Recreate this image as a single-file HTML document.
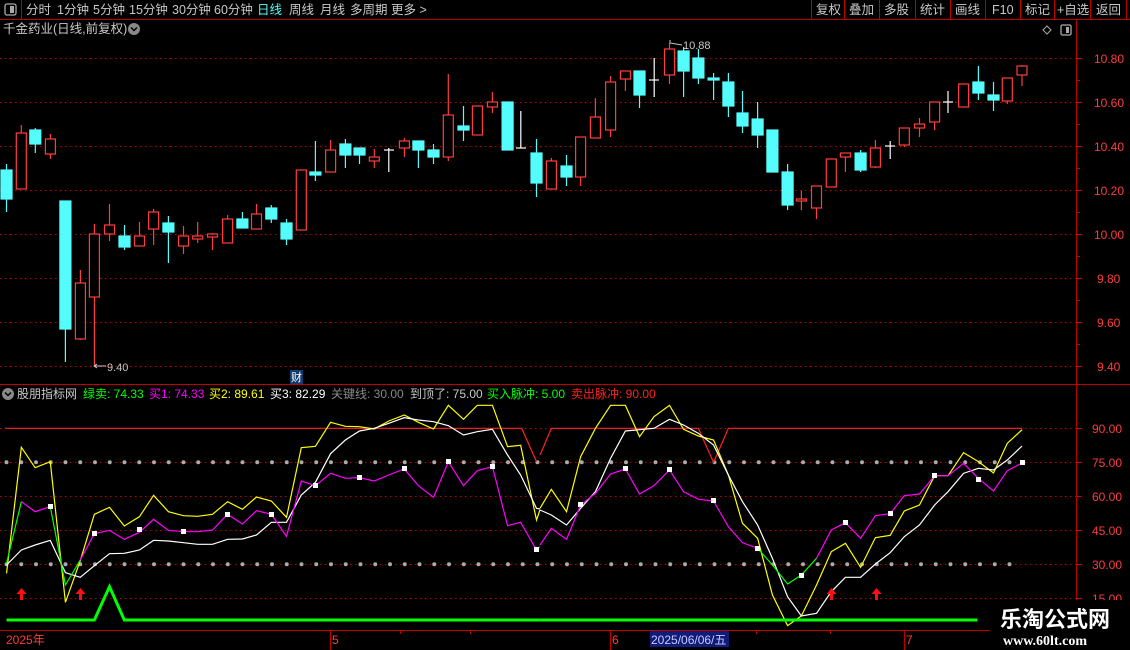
<!DOCTYPE html>
<html><head><meta charset="utf-8"><style>
*{margin:0;padding:0}
body{width:1130px;height:650px;background:#000;overflow:hidden;position:relative;font-family:"Liberation Sans","Noto Sans CJK SC",sans-serif;font-size:12px;color:#c8c8c8}
</style></head><body>
<svg width="1130" height="650" style="position:absolute;left:0;top:0" font-family="Liberation Sans, Noto Sans CJK SC, sans-serif">
<line x1="0" y1="19.5" x2="1130" y2="19.5" stroke="#c00000"/>
<line x1="21.5" y1="0" x2="21.5" y2="19" stroke="#c00000"/>
<rect x="5" y="4" width="11" height="11" rx="2" fill="none" stroke="#aaa" stroke-width="1.3"/><rect x="10" y="6" width="4" height="7" fill="#aaa"/>
<g stroke="#c00000"><line x1="811.5" y1="0" x2="811.5" y2="19"/><line x1="844.5" y1="0" x2="844.5" y2="19"/><line x1="879.5" y1="0" x2="879.5" y2="19"/><line x1="915.5" y1="0" x2="915.5" y2="19"/><line x1="950.5" y1="0" x2="950.5" y2="19"/><line x1="985.5" y1="0" x2="985.5" y2="19"/><line x1="1020.5" y1="0" x2="1020.5" y2="19"/><line x1="1054.5" y1="0" x2="1054.5" y2="19"/><line x1="1090.5" y1="0" x2="1090.5" y2="19"/><line x1="1126.5" y1="0" x2="1126.5" y2="19"/></g>
<g font-size="12.5" fill="#c8c8c8">
<text x="26" y="14">分时</text><text x="57" y="14">1分钟</text><text x="93" y="14">5分钟</text><text x="129" y="14">15分钟</text><text x="172" y="14">30分钟</text><text x="214" y="14">60分钟</text><text x="257" y="14" fill="#54fcfc">日线</text><text x="289" y="14">周线</text><text x="320" y="14">月线</text><text x="350" y="14">多周期</text><text x="391" y="14">更多 &gt;</text>
<text x="816" y="14">复权</text><text x="849" y="14">叠加</text><text x="884" y="14">多股</text><text x="920" y="14">统计</text><text x="955" y="14">画线</text><text x="992" y="14">F10</text><text x="1025" y="14">标记</text><text x="1057" y="14">+自选</text><text x="1096" y="14">返回</text>
</g>
<text x="3" y="33" font-size="12.5" fill="#c8c8c8">千金药业(日线,前复权)</text>
<circle cx="134" cy="29" r="6" fill="#888"/><path d="M131 27.5l3 3 3-3" stroke="#000" stroke-width="1.5" fill="none"/>
<path d="M1047 26l4 4-4 4-4-4z" fill="none" stroke="#aaa"/>
<rect x="1061" y="25" width="10" height="10" rx="1.5" fill="none" stroke="#aaa" stroke-width="1.3"/><rect x="1066" y="27" width="3" height="6" fill="#aaa"/>
<line x1="1076.5" y1="20" x2="1076.5" y2="630" stroke="#c00000"/>
<line x1="0" y1="384.5" x2="1130" y2="384.5" stroke="#c00000"/>
<line x1="0" y1="630.5" x2="990" y2="630.5" stroke="#c00000"/>
<g stroke="#c00000" stroke-dasharray="1.5 3.5">
<line x1="0" y1="58.5" x2="1076" y2="58.5"/><line x1="0" y1="102.5" x2="1076" y2="102.5"/><line x1="0" y1="146.5" x2="1076" y2="146.5"/><line x1="0" y1="190.5" x2="1076" y2="190.5"/><line x1="0" y1="234.5" x2="1076" y2="234.5"/><line x1="0" y1="278.5" x2="1076" y2="278.5"/><line x1="0" y1="322.5" x2="1076" y2="322.5"/><line x1="0" y1="366.5" x2="1076" y2="366.5"/>
<line x1="0" y1="428.5" x2="1076" y2="428.5"/><line x1="0" y1="462.5" x2="1076" y2="462.5"/><line x1="0" y1="496.5" x2="1076" y2="496.5"/><line x1="0" y1="530.5" x2="1076" y2="530.5"/><line x1="0" y1="564.5" x2="1076" y2="564.5"/><line x1="0" y1="598.5" x2="1076" y2="598.5"/>
</g>
<g stroke="#c00000"><line x1="1076" y1="58.5" x2="1082" y2="58.5"/><line x1="1076" y1="80.5" x2="1080" y2="80.5"/><line x1="1076" y1="102.5" x2="1082" y2="102.5"/><line x1="1076" y1="124.5" x2="1080" y2="124.5"/><line x1="1076" y1="146.5" x2="1082" y2="146.5"/><line x1="1076" y1="168.5" x2="1080" y2="168.5"/><line x1="1076" y1="190.5" x2="1082" y2="190.5"/><line x1="1076" y1="212.5" x2="1080" y2="212.5"/><line x1="1076" y1="234.5" x2="1082" y2="234.5"/><line x1="1076" y1="256.5" x2="1080" y2="256.5"/><line x1="1076" y1="278.5" x2="1082" y2="278.5"/><line x1="1076" y1="300.5" x2="1080" y2="300.5"/><line x1="1076" y1="322.5" x2="1082" y2="322.5"/><line x1="1076" y1="344.5" x2="1080" y2="344.5"/><line x1="1076" y1="366.5" x2="1082" y2="366.5"/>
<line x1="1076" y1="428.5" x2="1082" y2="428.5"/><line x1="1076" y1="462.5" x2="1082" y2="462.5"/><line x1="1076" y1="496.5" x2="1082" y2="496.5"/><line x1="1076" y1="530.5" x2="1082" y2="530.5"/><line x1="1076" y1="564.5" x2="1082" y2="564.5"/><line x1="1076" y1="598.5" x2="1082" y2="598.5"/></g>
<g fill="#ff3c3c" font-size="12">
<text x="1094" y="63">10.80</text><text x="1094" y="107">10.60</text><text x="1094" y="151">10.40</text><text x="1094" y="195">10.20</text><text x="1094" y="239">10.00</text><text x="1097" y="283">9.80</text><text x="1097" y="327">9.60</text><text x="1097" y="371">9.40</text>
<text x="1092" y="433">90.00</text><text x="1092" y="467">75.00</text><text x="1092" y="501">60.00</text><text x="1092" y="535">45.00</text><text x="1092" y="569">30.00</text><text x="1092" y="603">15.00</text>
</g>
<g stroke="#ff3c3c" stroke-width="1.2" fill="#000">
<line x1="21.3" y1="125" x2="21.3" y2="189"/><rect x="16.3" y="133" width="10" height="56"/>
<line x1="50.4" y1="134" x2="50.4" y2="159"/><rect x="45.4" y="139" width="10" height="15"/>
<line x1="80.4" y1="270" x2="80.4" y2="340"/><rect x="75.4" y="283" width="10" height="56"/>
<line x1="94.4" y1="224" x2="94.4" y2="367"/><rect x="89.4" y="234" width="10" height="63"/>
<line x1="109.5" y1="204" x2="109.5" y2="241"/><rect x="104.5" y="225" width="10" height="9"/>
<line x1="139.5" y1="222" x2="139.5" y2="246"/><rect x="134.5" y="236" width="10" height="10"/>
<line x1="153.6" y1="209" x2="153.6" y2="245"/><rect x="148.6" y="212" width="10" height="17"/>
<line x1="183.5" y1="226" x2="183.5" y2="254"/><rect x="178.5" y="236" width="10" height="10"/>
<line x1="197.7" y1="222" x2="197.7" y2="243"/><rect x="192.7" y="236" width="10" height="3"/>
<line x1="212.5" y1="233" x2="212.5" y2="250"/><rect x="207.5" y="234" width="10" height="3"/>
<line x1="227.6" y1="215" x2="227.6" y2="243"/><rect x="222.6" y="219" width="10" height="24"/>
<line x1="256.5" y1="204" x2="256.5" y2="229"/><rect x="251.5" y="214" width="10" height="15"/>
<rect x="296.3" y="170" width="10" height="60"/>
<line x1="330.6" y1="140" x2="330.6" y2="172"/><rect x="325.6" y="150" width="10" height="22"/>
<line x1="374.3" y1="149" x2="374.3" y2="168"/><rect x="369.3" y="157" width="10" height="4"/>
<line x1="404.4" y1="138" x2="404.4" y2="157"/><rect x="399.4" y="141" width="10" height="7"/>
<line x1="448.3" y1="74" x2="448.3" y2="161"/><rect x="443.3" y="115" width="10" height="42"/>
<rect x="472.4" y="106" width="10" height="29"/>
<line x1="492.4" y1="92" x2="492.4" y2="113"/><rect x="487.4" y="102" width="10" height="5"/>
<line x1="551.4" y1="158" x2="551.4" y2="189"/><rect x="546.4" y="161" width="10" height="28"/>
<line x1="580.6" y1="137" x2="580.6" y2="186"/><rect x="575.6" y="137" width="10" height="40"/>
<line x1="595.4" y1="98" x2="595.4" y2="138"/><rect x="590.4" y="117" width="10" height="21"/>
<line x1="610.6" y1="76" x2="610.6" y2="137"/><rect x="605.6" y="82" width="10" height="48"/>
<line x1="625.4" y1="71" x2="625.4" y2="91"/><rect x="620.4" y="71" width="10" height="8"/>
<line x1="669.5" y1="43" x2="669.5" y2="84"/><rect x="664.5" y="49" width="10" height="26"/>
<line x1="801.4" y1="191" x2="801.4" y2="210"/><rect x="796.4" y="199" width="10" height="2"/>
<line x1="816.5" y1="186" x2="816.5" y2="219"/><rect x="811.5" y="186" width="10" height="22"/>
<rect x="826.3" y="159" width="10" height="28"/>
<line x1="845.4" y1="153" x2="845.4" y2="172"/><rect x="840.4" y="153" width="10" height="4"/>
<line x1="875.4" y1="140" x2="875.4" y2="168"/><rect x="870.4" y="148" width="10" height="19"/>
<line x1="904.3" y1="128" x2="904.3" y2="147"/><rect x="899.3" y="128" width="10" height="17"/>
<line x1="919.5" y1="118" x2="919.5" y2="137"/><rect x="914.5" y="124" width="10" height="4"/>
<line x1="934.6" y1="102" x2="934.6" y2="130"/><rect x="929.6" y="102" width="10" height="20"/>
<rect x="958.6" y="84" width="10" height="23"/>
<line x1="1007.3" y1="78" x2="1007.3" y2="104"/><rect x="1002.3" y="78" width="10" height="23"/>
<line x1="1022" y1="65" x2="1022" y2="86"/><rect x="1017" y="66" width="10" height="9"/>
</g>
<g stroke="#54fcfc" stroke-width="1.2" fill="#54fcfc">
<line x1="6.5" y1="164" x2="6.5" y2="212"/><rect x="1" y="170" width="11" height="29"/>
<line x1="35.3" y1="128" x2="35.3" y2="153"/><rect x="29.8" y="130" width="11" height="14"/>
<line x1="65.4" y1="201" x2="65.4" y2="362"/><rect x="59.9" y="201" width="11" height="128"/>
<line x1="124.5" y1="225" x2="124.5" y2="250"/><rect x="119" y="236" width="11" height="11"/>
<line x1="168.4" y1="216" x2="168.4" y2="263"/><rect x="162.9" y="223" width="11" height="9"/>
<line x1="242.4" y1="212" x2="242.4" y2="228"/><rect x="236.9" y="219" width="11" height="9"/>
<line x1="271.3" y1="205" x2="271.3" y2="223"/><rect x="265.8" y="208" width="11" height="11"/>
<line x1="286.5" y1="219" x2="286.5" y2="245"/><rect x="281" y="223" width="11" height="16"/>
<line x1="315.4" y1="141" x2="315.4" y2="181"/><rect x="309.9" y="172" width="11" height="3"/>
<line x1="345.4" y1="139" x2="345.4" y2="168"/><rect x="339.9" y="144" width="11" height="11"/>
<line x1="359.5" y1="148" x2="359.5" y2="164"/><rect x="354" y="148" width="11" height="7"/>
<line x1="418.4" y1="141" x2="418.4" y2="168"/><rect x="412.9" y="141" width="11" height="9"/>
<line x1="433.5" y1="144" x2="433.5" y2="164"/><rect x="428" y="150" width="11" height="7"/>
<line x1="463.5" y1="106" x2="463.5" y2="141"/><rect x="458" y="126" width="11" height="4"/>
<rect x="502.1" y="102" width="11" height="48"/>
<line x1="536.5" y1="139" x2="536.5" y2="197"/><rect x="531" y="153" width="11" height="30"/>
<line x1="566.5" y1="155" x2="566.5" y2="186"/><rect x="561" y="166" width="11" height="11"/>
<line x1="639.5" y1="71" x2="639.5" y2="108"/><rect x="634" y="71" width="11" height="24"/>
<line x1="683.6" y1="47" x2="683.6" y2="97"/><rect x="678.1" y="51" width="11" height="20"/>
<line x1="698.4" y1="49" x2="698.4" y2="84"/><rect x="692.9" y="58" width="11" height="20"/>
<line x1="713.6" y1="73" x2="713.6" y2="100"/><rect x="708.1" y="78" width="11" height="2"/>
<line x1="728.4" y1="73" x2="728.4" y2="117"/><rect x="722.9" y="82" width="11" height="24"/>
<line x1="742.5" y1="91" x2="742.5" y2="133"/><rect x="737" y="113" width="11" height="13"/>
<line x1="757.6" y1="102" x2="757.6" y2="148"/><rect x="752.1" y="119" width="11" height="16"/>
<rect x="766.9" y="130" width="11" height="42"/>
<line x1="787.6" y1="164" x2="787.6" y2="210"/><rect x="782.1" y="172" width="11" height="33"/>
<line x1="860.6" y1="150" x2="860.6" y2="172"/><rect x="855.1" y="153" width="11" height="17"/>
<line x1="978.4" y1="66" x2="978.4" y2="100"/><rect x="972.9" y="82" width="11" height="11"/>
<line x1="993.5" y1="82" x2="993.5" y2="111"/><rect x="988" y="95" width="11" height="5"/>
</g>
<g stroke="#fff" stroke-width="1.2">
<line x1="388.8" y1="148" x2="388.8" y2="172"/><line x1="384" y1="150" x2="394" y2="150"/>
<line x1="520.8" y1="111" x2="520.8" y2="148"/><line x1="516" y1="148" x2="526" y2="148"/>
<line x1="654.2" y1="58" x2="654.2" y2="97"/><line x1="649" y1="80" x2="659" y2="80"/>
<line x1="890.2" y1="141" x2="890.2" y2="159"/><line x1="885" y1="146" x2="895" y2="146"/>
<line x1="948" y1="91" x2="948" y2="113"/><line x1="943" y1="102" x2="953" y2="102"/>
</g>
<g fill="#c8c8c8" font-size="11"><text x="683" y="49">10.88</text><text x="107" y="371">9.40</text></g>
<path d="M670 40l0 3 12 2M94 366h12M94 366l3-2M94 366l3 2" stroke="#c8c8c8" fill="none"/>
<rect x="290" y="370" width="13" height="14" fill="#143a6e"/><text x="291" y="381" font-size="11" fill="#fff">财</text>
<circle cx="8" cy="394" r="6" fill="#888"/><path d="M5 392.5l3 3 3-3" stroke="#000" stroke-width="1.5" fill="none"/>
<g font-size="12"><text x="17" y="398" fill="#c8c8c8">股朋指标网</text><text x="83" y="398" fill="#00ff00">绿卖: 74.33</text><text x="149" y="398" fill="#ff00ff">买1: 74.33</text><text x="209" y="398" fill="#ffff00">买2: 89.61</text><text x="270" y="398" fill="#fff">买3: 82.29</text><text x="331" y="398" fill="#888">关键线: 30.00</text><text x="410" y="398" fill="#c8c8c8">到顶了: 75.00</text><text x="487" y="398" fill="#00ff00">买入脉冲: 5.00</text><text x="571" y="398" fill="#ff2020">卖出脉冲: 90.00</text></g>
<g stroke="#aaa" stroke-width="4" stroke-linecap="round" stroke-dasharray="0 14.75">
<line x1="6.5" y1="462.3" x2="1022" y2="462.3"/><line x1="6.5" y1="564.3" x2="1022" y2="564.3"/></g>
<g transform="translate(0,395) scale(0.34435,0.33333)" fill="none" stroke-width="1.2">
<path vector-effect="non-scaling-stroke" stroke="#ff2020" d="M15 100H1515L1558 200"/>
<path vector-effect="non-scaling-stroke" stroke="#ffff00" d="M19 535L62 157L102 218L146 200L190 622L233 497L274 358L318 337L361 393L405 365L446 301L489 350L533 362L574 364L617 358L661 320L704 343L745 306L788 318L832 367L875 158L916 154L960 82L1003 94L1044 95L1087 102L1129 78L1174 60L1215 82L1259 102L1302 31L1346 73L1386 31L1430 31L1474 155L1512 151L1558 375L1568 345"/>
<path vector-effect="non-scaling-stroke" stroke="#fff" d="M19 510L62 465L102 450L146 436L190 533L233 547L274 512L318 476L361 475L405 465L446 436L489 438L533 443L574 448L617 448L661 433L704 432L745 420L788 382L832 382L875 300L916 262L960 176L1003 135L1044 108L1087 100L1129 85L1174 68L1215 75L1259 80L1302 92L1346 120L1386 110L1430 103L1474 180L1512 240L1558 340L1568 342"/>
<path vector-effect="non-scaling-stroke" stroke="#ff00ff" d="M62 320L102 350L146 335M233 495L274 416L318 406L361 433L405 412L446 373L489 406L533 410L574 410L617 405L661 358L704 387L745 347L788 358L832 424L875 258L916 272L960 235L1003 250L1044 248L1087 258L1129 240L1174 222L1215 272L1259 307L1302 200L1346 272L1386 227L1430 215L1474 392L1512 382L1558 465L1568 455"/>
<path vector-effect="non-scaling-stroke" stroke="#00ff00" d="M19 505L62 320M146 335L190 570L233 495"/>
<path vector-effect="non-scaling-stroke" stroke="#00ff00" stroke-width="3" d="M19 675H274L318 575L361 675H1568"/>
</g>
<g transform="translate(540,395) scale(0.34435,0.33333)" fill="none" stroke-width="1.2">
<path vector-effect="non-scaling-stroke" stroke="#ff2020" d="M0 180L33 100H460L504 202L547 100H1400"/>
<path vector-effect="non-scaling-stroke" stroke="#ffff00" d="M0 340L33 283L77 350L118 185L161 100L205 31L248 31L289 125L331 65L376 31L417 103L460 123L504 135L547 240L588 385L632 430L675 600L719 692L759 663L803 570L846 470L887 445L931 517L974 428L1017 421L1058 348L1102 330L1146 242L1185 242L1230 173L1273 200L1317 234L1357 145L1400 104"/>
<path vector-effect="non-scaling-stroke" stroke="#fff" d="M0 345L33 360L77 390L118 340L161 290L205 190L248 108L289 104L331 100L376 73L417 90L460 115L504 150L547 240L588 320L632 390L675 490L719 605L759 663L803 655L846 590L887 547L931 547L974 507L1017 473L1058 425L1102 390L1146 330L1185 290L1230 235L1273 220L1317 225L1357 195L1400 153"/>
<path vector-effect="non-scaling-stroke" stroke="#ff00ff" d="M0 450L33 400L77 433L118 330L161 295L205 237L248 222L289 297L331 272L376 225L417 290L460 313L504 318L547 395L588 443L632 460M803 490L846 405L887 383L931 430L974 362L1017 356L1058 302L1102 297L1146 242L1185 242L1230 205L1273 250L1317 288L1357 227L1400 204"/>
<path vector-effect="non-scaling-stroke" stroke="#00ff00" d="M632 460L675 510L719 567L759 540L803 490"/>
<path vector-effect="non-scaling-stroke" stroke="#00ff00" stroke-width="3" d="M0 675H1270"/>
</g>
<g fill="#fff"><rect x="48" y="504" width="5" height="5"/><rect x="92" y="531" width="5" height="5"/><rect x="137" y="527" width="5" height="5"/><rect x="181" y="529" width="5" height="5"/><rect x="225" y="512" width="5" height="5"/><rect x="269" y="512" width="5" height="5"/><rect x="313" y="483" width="5" height="5"/><rect x="357" y="475" width="5" height="5"/><rect x="402" y="466" width="5" height="5"/><rect x="446" y="459" width="5" height="5"/><rect x="490" y="464" width="5" height="5"/><rect x="534" y="547" width="5" height="5"/>
<rect x="578" y="502" width="5" height="5"/><rect x="623" y="466" width="5" height="5"/><rect x="667" y="467" width="5" height="5"/><rect x="711" y="498" width="5" height="5"/><rect x="755" y="546" width="5" height="5"/><rect x="799" y="573" width="5" height="5"/><rect x="843" y="520" width="5" height="5"/><rect x="888" y="511" width="5" height="5"/><rect x="932" y="473" width="5" height="5"/><rect x="976" y="477" width="5" height="5"/><rect x="1020" y="460" width="5" height="5"/></g>
<g fill="#ff1010"><path d="M21.5 588l-5 6h3.5v6h3v-6h3.5z"/><path d="M80.5 588l-5 6h3.5v6h3v-6h3.5z"/><path d="M831.5 588l-5 6h3.5v6h3v-6h3.5z"/><path d="M876.5 588l-5 6h3.5v6h3v-6h3.5z"/></g>
<g stroke="#c00000"><line x1="330.5" y1="630" x2="330.5" y2="650"/><line x1="610.5" y1="630" x2="610.5" y2="650"/><line x1="904.5" y1="630" x2="904.5" y2="650"/><line x1="400.5" y1="630" x2="400.5" y2="634"/><line x1="470.5" y1="630" x2="470.5" y2="634"/><line x1="756.5" y1="630" x2="756.5" y2="634"/><line x1="830.5" y1="630" x2="830.5" y2="634"/></g>
<rect x="650" y="631" width="79" height="16" fill="#101c78"/>
<g font-size="12" fill="#ff3c3c"><text x="6" y="644">2025年</text><text x="332" y="644">5</text><text x="612" y="644">6</text><text x="906" y="644">7</text><text x="651" y="644" fill="#c8c8ff">2025/06/06/五</text></g>
<rect x="990" y="600" width="140" height="50" fill="#000"/>
<text x="1000" y="627" font-size="22" font-weight="bold" fill="#fff" font-family="Noto Sans CJK SC, sans-serif">乐淘公式网</text>
<text x="1003" y="645" font-size="14" font-weight="bold" fill="#fff" font-family="Liberation Serif, serif">www.60lt.com</text>
</svg>
</body></html>
